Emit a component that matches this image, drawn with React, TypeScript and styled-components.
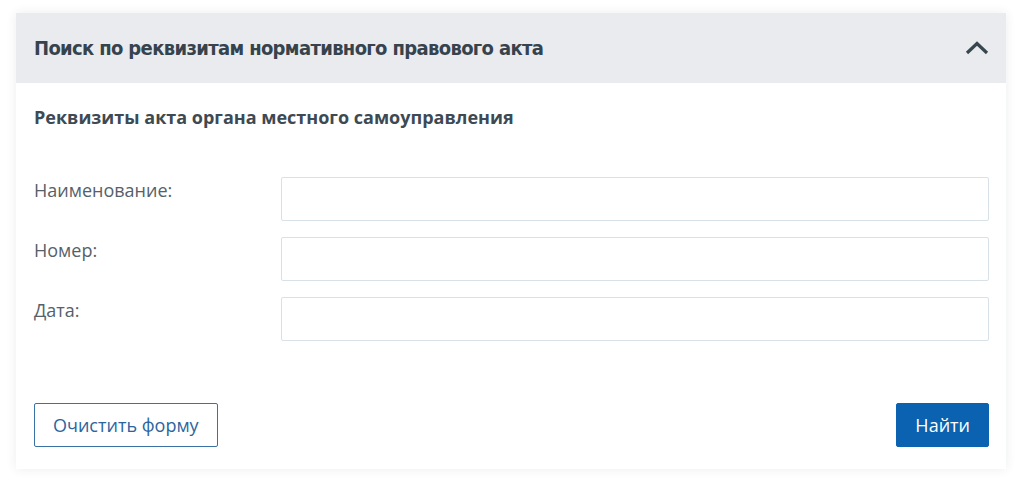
import { createGlobalStyle } from 'styled-components';
import styled from 'styled-components';

const GlobalStyle = createGlobalStyle`
  html, body { margin: 0; padding: 0; background: #ffffff; }
  body { font-family: "Open Sans", "Noto Sans", sans-serif; color: #37474f; }
  * { box-sizing: border-box; }
`;

const Page = styled.div`
  padding: 13px 18px 17px 16px;
`;

const Card = styled.section`
  background: #fff;
  box-shadow: 0 0 10px rgba(40, 50, 70, 0.09);
`;

const Header = styled.div`
  height: 70px;
  display: flex;
  align-items: center;
  justify-content: space-between;
  padding: 0 17px 0 18px;
  background: #e9ebef;

  h2 {
    margin: 0;
    font-family: "Liberation Sans Narrow", "DejaVu Sans Condensed", sans-serif;
    font-size: 20px;
    font-weight: 700;
    color: #37434c;
    letter-spacing: -0.65px;
  }
`;

const Toggle = styled.button`
  border: none;
  background: none;
  padding: 0;
  width: 24px;
  height: 24px;
  display: flex;
  align-items: center;
  justify-content: center;
  cursor: pointer;
  color: #37474f;
`;

const Body = styled.div`
  padding: 22px 17px 22px 18px;
`;

const SubTitle = styled.h3`
  margin: 0 0 48px;
  font-size: 18px;
  font-weight: 700;
  color: #3d4a53;
  line-height: 24px;
`;

const Fields = styled.div`
  display: flex;
  flex-direction: column;
  gap: 16px;
`;

const Row = styled.label`
  display: grid;
  grid-template-columns: 247px 1fr;
  align-items: start;
`;

const LabelText = styled.span`
  font-size: 18px;
  color: #55616a;
  line-height: 24px;
  padding-top: 1px;
`;

const Input = styled.input`
  height: 44px;
  width: 100%;
  border: 1px solid #d9e1e8;
  border-radius: 2px;
  background: #fff;
  font: inherit;
  padding: 0 12px;
  outline: none;
`;

const Actions = styled.div`
  display: flex;
  justify-content: space-between;
  margin-top: 62px;
`;

const Button = styled.button<{ $primary?: boolean }>`
  height: 44px;
  padding: 0 18px;
  border-radius: 2px;
  font-family: "Open Sans", "Noto Sans", sans-serif;
  font-size: 18px;
  cursor: pointer;
  border: 1px solid ${p => (p.$primary ? '#0b62b0' : '#3a72a3')};
  background: ${p => (p.$primary ? '#0b62b0' : '#fff')};
  color: ${p => (p.$primary ? '#fff' : '#2b65a0')};
`;

export default function App() {
  return (
    <>
      <GlobalStyle />
      <Page>
        <Card>
          <Header>
            <h2>Поиск по реквизитам нормативного правового акта</h2>
            <Toggle aria-label="Свернуть">
              <svg width="24" height="16" viewBox="0 0 24 16" fill="none">
                <path d="M2 13 L12 3.5 L22 13" stroke="currentColor" strokeWidth="3.2" strokeLinejoin="miter" />
              </svg>
            </Toggle>
          </Header>
          <Body>
            <SubTitle>Реквизиты акта органа местного самоуправления</SubTitle>
            <Fields>
              <Row>
                <LabelText>Наименование:</LabelText>
                <Input />
              </Row>
              <Row>
                <LabelText>Номер:</LabelText>
                <Input />
              </Row>
              <Row>
                <LabelText>Дата:</LabelText>
                <Input />
              </Row>
            </Fields>
            <Actions>
              <Button>Очистить форму</Button>
              <Button $primary>Найти</Button>
            </Actions>
          </Body>
        </Card>
      </Page>
    </>
  );
}
